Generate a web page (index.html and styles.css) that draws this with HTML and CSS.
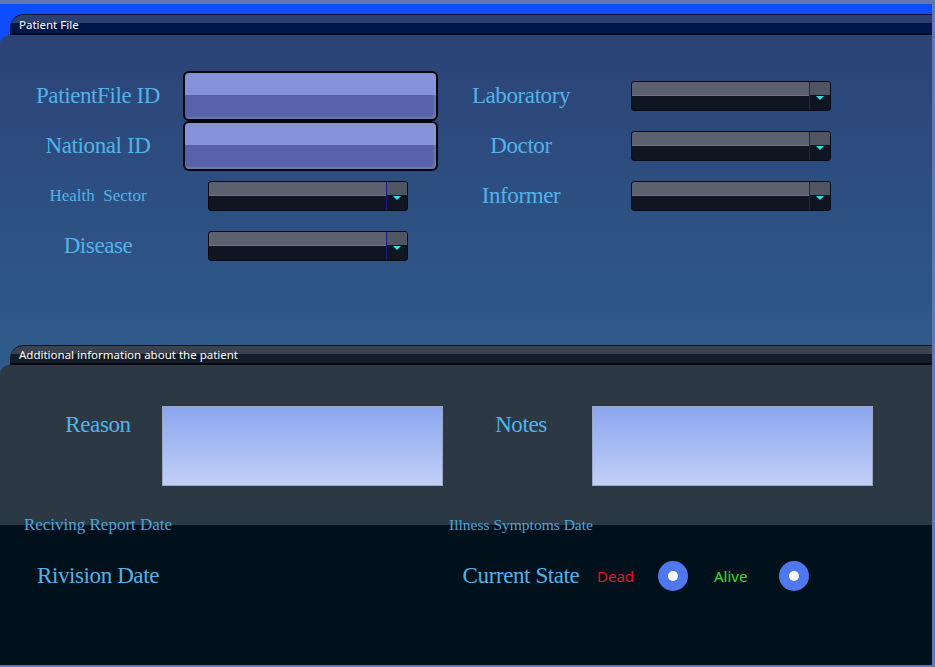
FILE: index.html
```html
<!DOCTYPE html>
<html>
<head>
<meta charset="utf-8">
<link rel="stylesheet" href="styles.css">
</head>
<body>
<div class="app">
  <section class="group group-main">
    <div class="tab tab-main"><span class="tab-text">Patient File</span></div>
    <div class="panel panel-main">
      <div class="form-grid">
        <label class="lbl big">PatientFile ID</label>
        <div class="tb"></div>
        <label class="lbl big">Laboratory</label>
        <div class="combo combo-right"><span class="combo-field"></span><span class="combo-btn"><span class="arrow"></span></span></div>

        <label class="lbl big">National ID</label>
        <div class="tb"></div>
        <label class="lbl big">Doctor</label>
        <div class="combo combo-right"><span class="combo-field"></span><span class="combo-btn"><span class="arrow"></span></span></div>

        <label class="lbl small">Health  Sector</label>
        <div class="combo combo-left"><span class="combo-field"></span><span class="combo-btn"><span class="arrow"></span></span></div>
        <label class="lbl big">Informer</label>
        <div class="combo combo-right"><span class="combo-field"></span><span class="combo-btn"><span class="arrow"></span></span></div>

        <label class="lbl big">Disease</label>
        <div class="combo combo-left"><span class="combo-field"></span><span class="combo-btn"><span class="arrow"></span></span></div>
      </div>
    </div>
  </section>
  <section class="group group-extra">
    <div class="tab tab-extra"><span class="tab-text">Additional information about the patient</span></div>
    <div class="panel panel-extra">
      <div class="memo-row">
        <label class="lbl big memo-lbl">Reason</label>
        <div class="memo"></div>
        <label class="lbl big memo-lbl memo-lbl2">Notes</label>
        <div class="memo"></div>
      </div>
      <div class="dates-row">
        <label class="lbl date">Reciving Report Date</label>
        <span></span>
        <label class="lbl date date2">Illness Symptoms Date</label>
      </div>
      <div class="state-row">
        <label class="lbl big">Rivision Date</label>
        <span></span>
        <label class="lbl big">Current State</label>
        <div class="state">
          <span class="opt dead">Dead</span>
          <span class="radio"></span>
          <span class="opt alive">Alive</span>
          <span class="radio"></span>
        </div>
      </div>
    </div>
  </section>
</div>
</body>
</html>
```

FILE: styles.css
```css
html, body {
  margin: 0;
  padding: 0;
}
body {
  background: #6577b2;
  width: 935px;
  height: 667px;
  overflow: hidden;
}
.app {
  width: 932px;
  height: 661px;
  margin-top: 4px;
  display: flex;
  flex-direction: column;
  overflow: hidden;
}
.group-main {
  background: #0b4dff;
  padding-top: 10px;
}
.tab {
  box-sizing: border-box;
  margin-left: 10px;
  display: flex;
  align-items: center;
  padding-left: 9px;
  border-top-left-radius: 14px;
}
.tab-text {
  font-family: "Noto Sans", "Open Sans", sans-serif;
  font-size: 11.5px;
  color: #ffffff;
  line-height: 14px;
  padding-top: 1px;
}
.tab-main {
  height: 21px;
  border-top: 1px solid #0a1233;
  border-bottom: 2px solid #050b22;
  background: linear-gradient(#2c4070 0 8px, #03184a 8px);
}
.panel {
  border-top-left-radius: 9px;
}
.panel-main {
  height: 310px;
  background: linear-gradient(#2c4377, #2e5a8a);
}
.form-grid {
  display: grid;
  grid-template-columns: 156px 264px 162px 1fr;
  grid-auto-rows: 50px;
  align-items: center;
  padding: 36px 0 0 20px;
}
.lbl {
  font-family: "Liberation Serif", "Times New Roman", serif;
  color: #52b3ea;
  text-align: center;
  white-space: pre;
}
.big {
  font-size: 23px;
  letter-spacing: -0.4px;
}
.small {
  font-size: 17px;
}
.tb {
  width: 255px;
  height: 50px;
  margin-left: 7px;
  box-sizing: border-box;
  border: 2px solid #05060c;
  border-radius: 6px;
  background: linear-gradient(#8591d9 0 22px, #5762aa 22px);
  box-shadow: inset -2px -2px 2px rgba(160, 165, 190, 0.35);
}
.combo {
  width: 200px;
  height: 30px;
  box-sizing: border-box;
  border: 1px solid #060a14;
  border-radius: 3px;
  display: flex;
  overflow: hidden;
  background: linear-gradient(#5b616e 0 13px, #6d7482 13px 14px, #0f1521 14px);
}
.combo-left {
  margin-left: 32px;
}
.combo-right {
  margin-left: 29px;
}
.combo-field {
  flex: 1;
}
.combo-btn {
  width: 20px;
  border-left: 1px solid #1c1a8c;
  display: flex;
  align-items: center;
  justify-content: center;
  padding-top: 3px;
  background: linear-gradient(#4f5562 0 13px, #0f1521 13px);
}
.arrow {
  width: 0;
  height: 0;
  border-left: 4px solid transparent;
  border-right: 4px solid transparent;
  border-top: 4px solid #2fe3f2;
}
.group-extra {
  background: #2e5a8a;
  flex: 1;
  display: flex;
  flex-direction: column;
}
.tab-extra {
  height: 20px;
  border-top: 1px solid #0c1420;
  border-bottom: 2px solid #03060a;
  background: linear-gradient(#39424e 0 8px, #131d29 8px);
}
.panel-extra {
  flex: 1;
  background: linear-gradient(#2c3945 0 160px, #01111c 160px);
  padding-top: 41px;
}
.memo-row {
  display: flex;
  align-items: flex-start;
  padding-left: 34px;
}
.memo-lbl {
  width: 128px;
  line-height: 38px;
}
.memo-lbl2 {
  width: 142px;
  padding-left: 7px;
}
.memo {
  width: 281px;
  height: 80px;
  box-sizing: border-box;
  border: 1px solid #9ba7c6;
  background: linear-gradient(#8aa6ee, #c2cff7);
}
.dates-row,
.state-row {
  display: grid;
  grid-template-columns: 196px 250px 150px 1fr;
  align-items: center;
}
.dates-row {
  margin-top: 24px;
  height: 30px;
}
.date {
  font-size: 17px;
  color: #4aa7dc;
}
.date2 {
  font-size: 15.5px;
}
.state-row {
  height: 72px;
}
.state {
  display: flex;
  align-items: center;
  margin-left: 1px;
}
.opt {
  font-family: "Noto Sans", "Open Sans", sans-serif;
  font-size: 15px;
}
.dead {
  color: #e8141e;
  width: 61px;
}
.alive {
  color: #2ee02e;
  width: 65px;
  margin-left: 26px;
}
.radio {
  width: 30px;
  height: 30px;
  border-radius: 50%;
  background: #4f78ef;
  display: flex;
  align-items: center;
  justify-content: center;
}
.radio::after {
  content: "";
  width: 10px;
  height: 10px;
  border-radius: 50%;
  background: #ffffff;
}
```
